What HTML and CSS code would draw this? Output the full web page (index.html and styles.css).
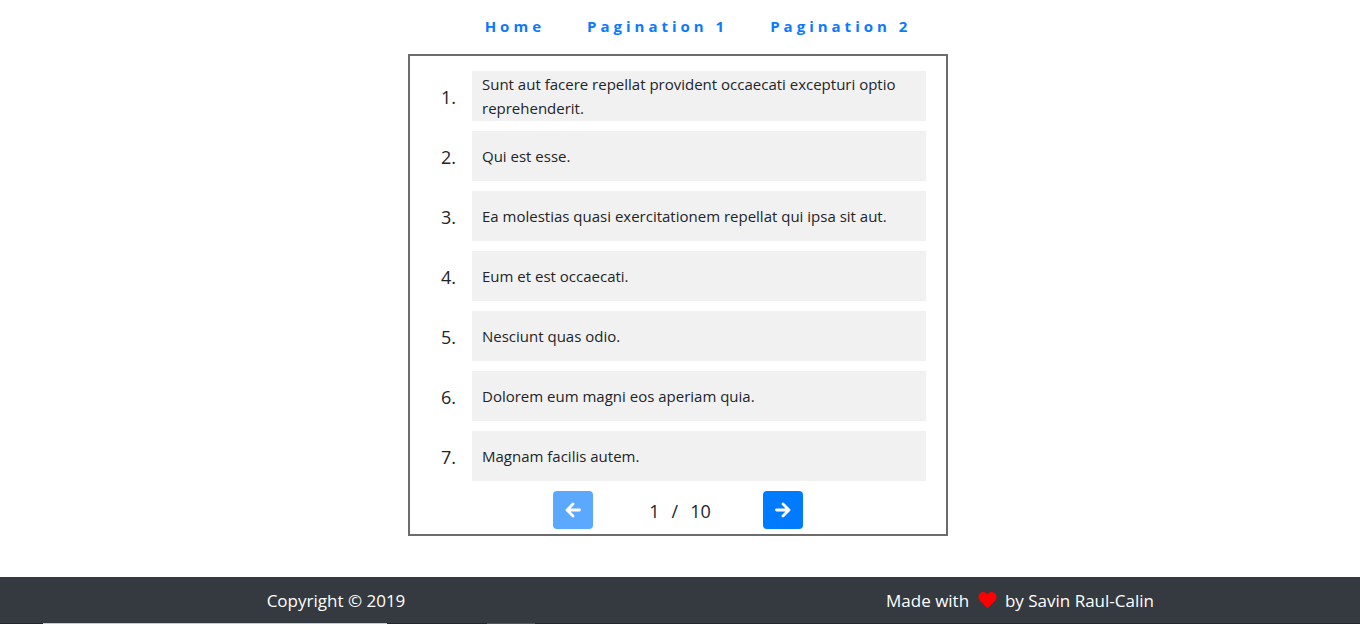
FILE: index.html
```html
<!DOCTYPE html>
<html lang="en">
<head>
<meta charset="utf-8">
<meta name="viewport" content="width=device-width, initial-scale=1">
<title>Pagination</title>
<link rel="stylesheet" href="styles.css">
</head>
<body>
<nav class="nav">
  <a href="#home">Home</a>
  <a href="#pagination-1">Pagination 1</a>
  <a href="#pagination-2">Pagination 2</a>
</nav>
<main class="content">
  <section class="card">
    <ol class="posts">
      <li><span class="number">1.</span><p class="title">Sunt aut facere repellat provident occaecati excepturi optio reprehenderit.</p></li>
      <li><span class="number">2.</span><p class="title">Qui est esse.</p></li>
      <li><span class="number">3.</span><p class="title">Ea molestias quasi exercitationem repellat qui ipsa sit aut.</p></li>
      <li><span class="number">4.</span><p class="title">Eum et est occaecati.</p></li>
      <li><span class="number">5.</span><p class="title">Nesciunt quas odio.</p></li>
      <li><span class="number">6.</span><p class="title">Dolorem eum magni eos aperiam quia.</p></li>
      <li><span class="number">7.</span><p class="title">Magnam facilis autem.</p></li>
    </ol>
    <div class="pager">
      <button class="btn" type="button" aria-label="Previous page" disabled>
        <svg viewBox="0 0 16 16" aria-hidden="true"><path d="M8 2 2 8l6 6M2.500 8H14.500"/></svg>
      </button>
      <div class="status"><span>1</span><span>/</span><span>10</span></div>
      <button class="btn" type="button" aria-label="Next page">
        <svg viewBox="0 0 16 16" aria-hidden="true"><path d="M8 2l6 6-6 6M13.500 8H1.500"/></svg>
      </button>
    </div>
  </section>
</main>
<footer class="footer">
  <p class="copyright">Copyright © 2019</p>
  <p class="credit">Made with
    <svg class="heart" viewBox="0 0 512 512" role="img" aria-label="love"><path d="M462 62c-55-47-136-38-186 13l-20 21-20-21C186 24 105 15 50 62c-63 54-66 150-10 208l193 200c13 13 33 13 46 0l193-200c56-58 53-154-10-208z"/></svg>
    by Savin Raul-Calin</p>
  <div class="edge"></div>
</footer>
</body>
</html>
```
FILE: styles.css
```css
* {
  box-sizing: border-box;
}

body {
  display: flex;
  flex-direction: column;
  min-height: 100vh;
  margin: 0;
  background: #fff;
  color: #212529;
  font: 16px/24px "Segoe UI", "Open Sans", sans-serif;
}

p {
  margin: 0;
}

.nav {
  display: flex;
  justify-content: center;
  gap: 42px;
  padding: 14px 0 16px 36px;
}

.nav a {
  color: #0a7aff;
  font-size: 15px;
  font-weight: 700;
  letter-spacing: 4px;
  text-decoration: none;
}

.content {
  padding: 0 4px 41px 0;
}

.card {
  max-width: 540px;
  margin: 0 auto;
  padding: 15px 20px 5px;
  border: 2px solid #6c6c6e;
}

.posts {
  display: grid;
  gap: 10px;
  margin: 0 0 10px;
  padding: 0;
  list-style: none;
}

.posts li {
  display: flex;
  min-height: 50px;
}

.number {
  display: flex;
  align-items: center;
  justify-content: flex-end;
  width: 26px;
  margin-right: 16px;
  padding-top: 2px;
  font-size: 18px;
}

.title {
  display: flex;
  flex: 1;
  align-items: center;
  padding: 0 10px;
  background: #f1f1f1;
  font-size: 15px;
}

.pager {
  display: flex;
  justify-content: center;
  align-items: center;
}

.btn {
  display: flex;
  align-items: center;
  justify-content: center;
  width: 40px;
  height: 38px;
  padding: 0;
  border: 0;
  border-radius: 4px;
  background: #007bff;
}

.btn:disabled {
  background: #5aa9ff;
}

.btn svg {
  width: 16px;
  height: 16px;
  fill: none;
  stroke: #fff;
  stroke-width: 2.8;
  stroke-linecap: round;
  stroke-linejoin: round;
}

.status {
  display: flex;
  justify-content: center;
  gap: 12px;
  width: 170px;
  padding: 2px 0 0 4px;
  font-size: 18px;
}

.footer {
  display: grid;
  grid-template-columns: 1fr 1fr;
  margin-top: auto;
  padding-top: 12px;
  background: #343a40;
  color: #fff;
  font-size: 17px;
  text-align: center;
}

.copyright {
  padding-right: 8px;
}

.heart {
  width: 19px;
  height: 18px;
  margin: 0 4px;
  vertical-align: -2px;
  fill: #f00;
}

.edge {
  grid-column: 1 / -1;
  height: 1px;
  margin-top: 10px;
  background: linear-gradient(90deg, #25262b 43px, #c8c8c8 43px 387px, #25262b 387px 487px, #55575c 487px 535px, #25262b 535px);
}
```
